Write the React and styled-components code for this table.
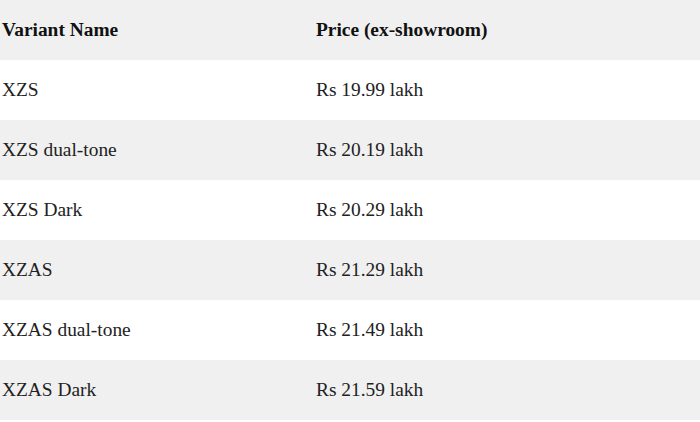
import React from 'react';
import styled, { createGlobalStyle } from 'styled-components';

const GlobalStyle = createGlobalStyle`
  html, body {
    margin: 0;
    padding: 0;
    background: #fff;
  }
  body {
    font-family: "Liberation Serif", "Times New Roman", serif;
    color: #1a1a1a;
  }
`;

const Table = styled.div`
  width: 700px;
  display: flex;
  flex-direction: column;
`;

const Row = styled.div`
  display: grid;
  grid-template-columns: 314px 1fr;
  height: 60px;
  align-items: center;
  background: ${props => props.shaded ? '#f0f0f0' : '#fff'};
`;

const Cell = styled.div`
  padding: 0 2px;
  font-size: 19.4px;
  font-weight: ${props => props.head ? 700 : 400};
  color: ${props => props.head ? '#111' : '#222'};
`;

const variants = [
  ['XZS', 'Rs 19.99 lakh'],
  ['XZS dual-tone', 'Rs 20.19 lakh'],
  ['XZS Dark', 'Rs 20.29 lakh'],
  ['XZAS', 'Rs 21.29 lakh'],
  ['XZAS dual-tone', 'Rs 21.49 lakh'],
  ['XZAS Dark', 'Rs 21.59 lakh'],
];

export default function App() {
  return (
    <>
      <GlobalStyle />
      <Table>
        <Row shaded>
          <Cell head>Variant Name</Cell>
          <Cell head>Price (ex-showroom)</Cell>
        </Row>
        {variants.map(([name, price], i) => (
          <Row key={name} shaded={i % 2 === 1}>
            <Cell>{name}</Cell>
            <Cell>{price}</Cell>
          </Row>
        ))}
      </Table>
    </>
  );
}
